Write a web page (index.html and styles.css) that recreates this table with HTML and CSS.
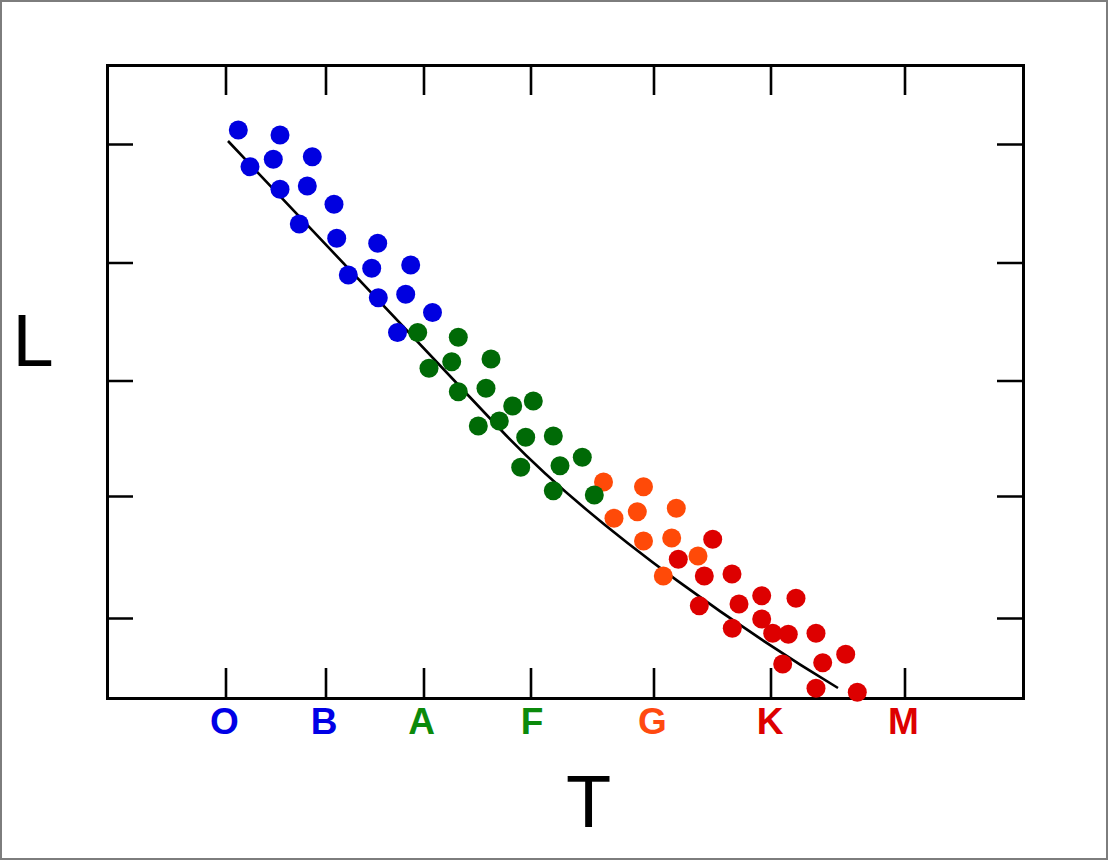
FILE: index.html
```html
<!DOCTYPE html>
<html>
<head>
<meta charset="utf-8">
<title>L vs T</title>
<link rel="stylesheet" href="styles.css">
</head>
<body>
<div class="frame">
  <div class="chart-row">
    <div class="ylabel">L</div>
    <svg class="plot" viewBox="100 58 930 690" width="930" height="690" xmlns="http://www.w3.org/2000/svg">
      <g class="axes">
        <rect x="107.5" y="65.5" width="916" height="633"/>
        <path class="ticks" d="M226 67V95M326 67V95M424 67V95M531 67V95M654 67V95M771 67V95M905 67V95
          M226 697V668M326 697V668M424 697V668M531 697V668M654 697V668M771 697V668M905 697V668
          M108 144.5H133M108 263H133M108 381H133M108 496.5H133M108 618.5H133
          M1022 144.5H997M1022 263H997M1022 381H997M1022 496.5H997M1022 618.5H997"/>
      </g>
      <path class="curve" d="M228 141L500 429C600 535 760 641 838 688"/>
      <g class="b">
        <circle cx="238.3" cy="130" r="9.5"/><circle cx="280" cy="135" r="9.5"/>
        <circle cx="250" cy="166.7" r="9.5"/><circle cx="273.3" cy="159.3" r="9.5"/>
        <circle cx="312.3" cy="156.7" r="9.5"/><circle cx="280" cy="189.3" r="9.5"/>
        <circle cx="307.3" cy="186" r="9.5"/><circle cx="334" cy="204.3" r="9.5"/>
        <circle cx="299.3" cy="224" r="9.5"/><circle cx="336.7" cy="238.3" r="9.5"/>
        <circle cx="377.7" cy="243.3" r="9.5"/><circle cx="348.3" cy="275" r="9.5"/>
        <circle cx="371.7" cy="268.3" r="9.5"/><circle cx="410.7" cy="265" r="9.5"/>
        <circle cx="378.3" cy="297.7" r="9.5"/><circle cx="405.7" cy="294.3" r="9.5"/>
        <circle cx="432.5" cy="312.5" r="9.5"/><circle cx="397.5" cy="332.5" r="9.5"/>
      </g>
      <g class="r">
        <circle cx="712.7" cy="539.3" r="9.5"/><circle cx="678.3" cy="559.2" r="9.5"/>
        <circle cx="704.3" cy="576" r="9.5"/><circle cx="732" cy="574" r="9.5"/>
        <circle cx="699.3" cy="605.7" r="9.5"/><circle cx="739" cy="604" r="9.5"/>
        <circle cx="761.7" cy="595.7" r="9.5"/><circle cx="796" cy="598.3" r="9.5"/>
        <circle cx="732.3" cy="628.3" r="9.5"/><circle cx="761.7" cy="619" r="9.5"/>
        <circle cx="772.7" cy="633.3" r="9.5"/><circle cx="788.3" cy="634.3" r="9.5"/>
        <circle cx="816" cy="633.3" r="9.5"/><circle cx="782.7" cy="664" r="9.5"/>
        <circle cx="822.7" cy="662.7" r="9.5"/><circle cx="845.7" cy="654.3" r="9.5"/>
        <circle cx="816" cy="688.3" r="9.5"/><circle cx="857.3" cy="692.3" r="9.5"/>
      </g>
      <g class="o">
        <circle cx="603.5" cy="482" r="9.5"/><circle cx="643.5" cy="486.7" r="9.5"/>
        <circle cx="614" cy="518.3" r="9.5"/><circle cx="637.3" cy="511.7" r="9.5"/>
        <circle cx="676.3" cy="508.3" r="9.5"/><circle cx="643.5" cy="541" r="9.5"/>
        <circle cx="671.7" cy="538" r="9.5"/><circle cx="698" cy="556" r="9.5"/>
        <circle cx="663.3" cy="576" r="9.5"/>
      </g>
      <g class="g">
        <circle cx="417.7" cy="332.5" r="9.5"/><circle cx="458.3" cy="337.3" r="9.5"/>
        <circle cx="429" cy="368.3" r="9.5"/><circle cx="451.7" cy="361.7" r="9.5"/>
        <circle cx="491" cy="359" r="9.5"/><circle cx="458.3" cy="391.7" r="9.5"/>
        <circle cx="486" cy="388.3" r="9.5"/><circle cx="512.7" cy="406" r="9.5"/>
        <circle cx="533.3" cy="401" r="9.5"/><circle cx="478.3" cy="426" r="9.5"/>
        <circle cx="499.3" cy="421" r="9.5"/><circle cx="525.7" cy="437.3" r="9.5"/>
        <circle cx="553.3" cy="436" r="9.5"/><circle cx="520.7" cy="467.3" r="9.5"/>
        <circle cx="560" cy="465.7" r="9.5"/><circle cx="582.3" cy="457.3" r="9.5"/>
        <circle cx="553.3" cy="490.7" r="9.5"/><circle cx="594.3" cy="495" r="9.5"/>
      </g>
      <g class="spec">
        <text class="t-b" x="224.5" y="734">O</text>
        <text class="t-b" x="324" y="734">B</text>
        <text class="t-g" x="421.5" y="734">A</text>
        <text class="t-g" x="532" y="734">F</text>
        <text class="t-o" x="652.5" y="734">G</text>
        <text class="t-r" x="770" y="734">K</text>
        <text class="t-r" x="903.5" y="734">M</text>
      </g>
    </svg>
  </div>
  <div class="xlabel">T</div>
</div>
</body>
</html>
```
FILE: styles.css
```css
html, body {
  margin: 0;
  background: #ffffff;
}

.frame {
  width: 1108px;
  height: 860px;
  box-sizing: border-box;
  border: 2px solid #7d7d7d;
  padding-top: 56px;
  overflow: hidden;
  background: #ffffff;
  font-family: "Liberation Sans", Arial, sans-serif;
  color: #000000;
}

.chart-row {
  display: flex;
  height: 690px;
}

.ylabel {
  width: 98px;
  flex: none;
  box-sizing: border-box;
  padding-left: 10.6px;
  padding-top: 246.4px;
  font-size: 74px;
  line-height: 1;
}

.plot {
  display: block;
  flex: none;
}

.xlabel {
  padding-top: 16.9px;
  padding-left: 563.9px;
  font-size: 74px;
  line-height: 1;
}

.axes rect {
  fill: none;
  stroke: #000000;
  stroke-width: 3;
}

.ticks {
  fill: none;
  stroke: #000000;
  stroke-width: 2.6;
}

.curve {
  fill: none;
  stroke: #000000;
  stroke-width: 2.6;
}

.b { fill: #0000e0; }
.g { fill: #006a06; }
.o { fill: #ff4a08; }
.r { fill: #dd0000; }

.spec text {
  font-family: "Liberation Sans", Arial, sans-serif;
  font-weight: bold;
  font-size: 37px;
  text-anchor: middle;
}

.t-b { fill: #0000e6; }
.t-g { fill: #0b8a0b; }
.t-o { fill: #ff4a10; }
.t-r { fill: #dd0000; }
```
